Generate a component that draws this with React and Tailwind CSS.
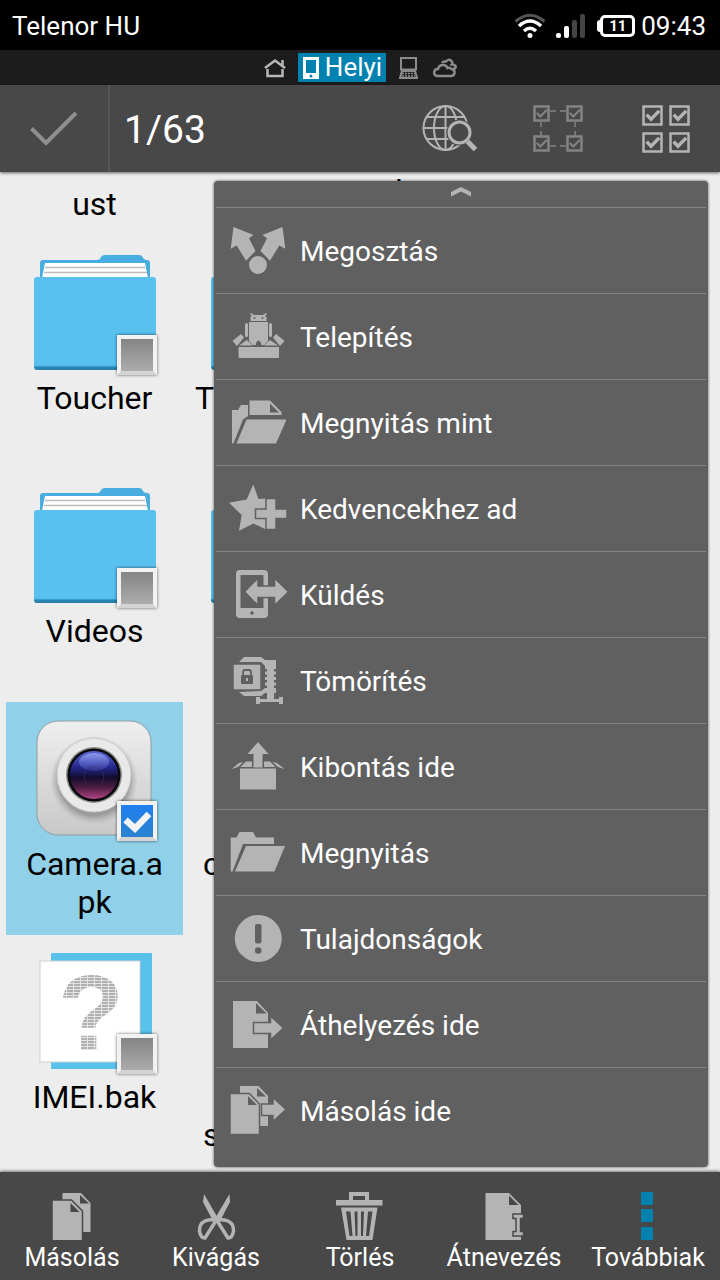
import React from "react";

const Share = () => (
  <>
    <path d="M3.5 4L23.5 12L19 15.3L25.5 28L16 37.7L6.7 22.5L.7 25.7Z" />
    <path d="M52.5 4L32.5 12L37 15.3L30.5 28L40 37.7L49.3 22.5L55.3 25.7Z" />
    <circle cx="28" cy="42" r="10" stroke="#606060" strokeWidth="2" />
  </>
);

const Install = () => (
  <>
    <path d="M20.5 12V8L22 7L20 5L21 4L24 6H33L36 4L37 5L35 7L36.5 8V12Z" />
    <circle cx="24.5" cy="9" r="1" fill="#606060" />
    <circle cx="32.5" cy="9" r="1" fill="#606060" />
    <path d="M19 13H38V32L34 36H31V34Q28.500 29 26 34V36H23L19 32Z" />
    <rect x="15" y="14" width="3" height="14" rx="1.500" />
    <rect x="39" y="14" width="3" height="14" rx="1.500" />
    <path d="M2.500 32L11 25L14 28.500L7 37Z" />
    <path d="M54.500 32L46 25L43 28.500L50 37Z" />
    <path d="M9 36.500L17 31L23 36.500Z" />
    <path d="M48 36.500L40 31L34 36.500Z" />
    <rect x="8.500" y="38" width="40.500" height="11" />
  </>
);

const OpenAs = () => (
  <>
    <path d="M2 48.500V15H8L11 10H18V21L13 24.500L3.500 48.500Z" />
    <path fillRule="evenodd" d="M19.500 5.500H40L51.500 17V20H19.500ZM40 8.500V17.500H49Z" />
    <path d="M16.500 24.500H56.500L46 48.500H6.500Z" />
  </>
);

const Favorite = () => (
  <>
    <path d="M23.300 3.500L28.500 18L36 17.500V48.500L23.500 42.500L9 49.700L11.700 34L-1 21.700L16.700 18.500Z" />
    <path
      d="M36 17.500H46V28H57V37.500H46V48.500H36V37.500H25.500V28H36Z"
      stroke="#606060"
      strokeWidth="1.500"
    />
  </>
);

const Send = () => (
  <>
    <path
      fillRule="evenodd"
      d="M9.500 3H34Q38 3 38 7V47Q38 51 34 51H9.500Q6 51 6 47V7Q6 3 9.500 3ZM10.500 8V41H33.500V8Z"
    />
    <circle cx="22" cy="46" r="1.800" fill="#606060" />
    <path
      d="M14.500 24.700L28 11V19H44.500V11L58.500 24.700L44.500 38.500V30.500H28V38.500Z"
      stroke="#606060"
      strokeWidth="1.500"
    />
  </>
);

const Compress = () => (
  <>
    <path d="M9 9L14 4H31L35 7H46V13H35L31 9Z" />
    <path d="M9 39L14 43H31L35 40H46V35H35L31 38Z" />
    <rect x="37" y="8" width="7" height="38" />
    <path d="M40.500 13V35" stroke="#b4b4b4" strokeWidth="11" strokeDasharray="3 2.500" />
    <path d="M26 44H30V46H49V44H53V51H49V49H30V51H26Z" />
    <rect x="3" y="11" width="28" height="26" stroke="#606060" strokeWidth="1.500" />
    <rect x="11" y="22" width="12" height="9" rx="1" fill="#606060" />
    <path d="M13 22V19Q13 17 15 17H19Q21 17 21 19V22" fill="none" stroke="#606060" strokeWidth="1.800" />
    <rect x="16" y="25" width="2" height="3" />
  </>
);

const Extract = () => (
  <>
    <path d="M28 3L38.500 15H32.500V28.500H23.500V15H17.500Z" />
    <path d="M10.500 28L16 22.500H22V28Z" />
    <path d="M45.500 28L40 22.500H34V28Z" />
    <path d="M1.500 30L9 24L13.500 23L8 28Z" />
    <path d="M54.500 30L47 24L42.500 23L48 28Z" />
    <rect x="10" y="29.500" width="36" height="21" />
  </>
);

const Open = () => (
  <>
    <path d="M.7 46.500V12.500H6.500L9.500 7H23L26 12.500H44V19H13L2.500 46.500Z" />
    <path d="M16 21H55L44.500 46.500H5Z" />
  </>
);

const Properties = () => (
  <>
    <circle cx="28.300" cy="27.500" r="23.500" />
    <rect x="25" y="13" width="6.500" height="19.500" rx="2" fill="#606060" />
    <circle cx="28.200" cy="39.500" r="3.300" fill="#606060" />
  </>
);

const MoveTo = () => (
  <>
    <path fillRule="evenodd" d="M3 4H27L38 16V51H3ZM26 6V16.500H36.500Z" />
    <path
      d="M23.500 25.500H40.500V19L53.500 31L40.500 43V36.500H23.500Z"
      stroke="#606060"
      strokeWidth="1.500"
    />
  </>
);

const CopyTo = () => (
  <>
    <path fillRule="evenodd" d="M10 3H28.500L38 13V43H10ZM27 5V13.500H36Z" />
    <path
      d="M31.500 21H43V14.500L56 26.500L43 38.500V32.500H31.500Z"
      stroke="#606060"
      strokeWidth="1.500"
    />
    <path d="M0 10.500H19.500L29.500 21V51.500H0Z" stroke="#606060" strokeWidth="1.500" />
    <path d="M18 13V22H27Z" fill="#606060" />
  </>
);

const menuItems = [
  { label: "Megosztás", Icon: Share },
  { label: "Telepítés", Icon: Install },
  { label: "Megnyitás mint", Icon: OpenAs },
  { label: "Kedvencekhez ad", Icon: Favorite },
  { label: "Küldés", Icon: Send },
  { label: "Tömörítés", Icon: Compress },
  { label: "Kibontás ide", Icon: Extract },
  { label: "Megnyitás", Icon: Open },
  { label: "Tulajdonságok", Icon: Properties },
  { label: "Áthelyezés ide", Icon: MoveTo },
  { label: "Másolás ide", Icon: CopyTo },
];

const Copy = () => (
  <>
    <path fillRule="evenodd" d="M14.500 1H33L42.500 11V40H14.500ZM32 3V11.500H41Z" />
    <path d="M4 8H23.500L34.500 19V49H4Z" stroke="#484848" strokeWidth="1.500" />
    <path d="M22.500 11V20H31.500Z" fill="#484848" />
  </>
);

const Cut = () => (
  <>
    <path d="M12 2L27 28L22 31L11 10Z" />
    <path d="M37.500 2L22 28L27 31L38 10Z" />
    <g fill="none" stroke="#b4b4b4" strokeWidth="3.500">
      <path d="M24 28Q18 27 13 29Q7 32 7.500 39Q8.500 46 13 46L25 27" />
      <path d="M25 28Q31 27 36 29Q42 32 41.500 39Q40.500 46 36 46L24 27" />
    </g>
  </>
);

const Trash = () => (
  <>
    <path fillRule="evenodd" d="M13 0H33V8H46.500V13.500H0V8H13ZM17 4V8H29V4Z" />
    <path
      fillRule="evenodd"
      d="M5 15.500H41.500L36.500 48H10.500ZM10 19.500L13.500 44H16.500L14.500 19.500ZM18.500 19.500L19.500 44H21.500V19.500ZM25 19.500V44H27L28 19.500ZM32 19.500L30 44H33L36.500 19.500Z"
    />
  </>
);

const Rename = () => (
  <>
    <path fillRule="evenodd" d="M5.500 1H29L41 13V48H5.500ZM29 3.500V13H38.500Z" />
    <path
      d="M33 22H43.500V26.500H40.500V39.500H43.500V44H33V39.500H36V26.500H33Z"
      stroke="#484848"
      strokeWidth="1.500"
    />
  </>
);

const More = () => (
  <g fill="#0081b0">
    <rect x="17" y="0" width="12" height="13" />
    <rect x="17" y="17" width="12" height="13" />
    <rect x="17" y="35" width="12" height="13" />
  </g>
);

const actions = [
  { label: "Másolás", Icon: Copy },
  { label: "Kivágás", Icon: Cut },
  { label: "Törlés", Icon: Trash },
  { label: "Átnevezés", Icon: Rename },
  { label: "Továbbiak", Icon: More },
];

const FolderArt = () => (
  <svg viewBox="0 0 125 125" className="size-[125px]" aria-hidden="true">
    <defs>
      <linearGradient id="folderFront" x1="0" y1="0" x2="0" y2="1">
        <stop offset="0.95" stopColor="#58c1f0" />
        <stop offset="0.97" stopColor="#2787b5" />
        <stop offset="1" stopColor="#2a7fa8" />
      </linearGradient>
    </defs>
    <path d="M8 30V11Q8 8 11 8H65Q68 8 69 5Q70 3 73 3H107Q110 3 111 6Q112 8 115 8Q118 8 118 11V30Z" fill="#48ade0" />
    <path d="M13 11H113L116 26H10Z" fill="#fff" />
    <path d="M13 15.500H113M12 20.500H115" stroke="#bdbdbd" strokeWidth="1.500" />
    <rect x="2" y="25" width="122" height="93" rx="3" fill="url(#folderFront)" />
  </svg>
);

const CameraArt = () => (
  <svg viewBox="0 0 125 125" className="size-[125px]" aria-hidden="true">
    <defs>
      <linearGradient id="camBody" x1="0" y1="0" x2="0" y2="1">
        <stop offset="0" stopColor="#efefef" />
        <stop offset="1" stopColor="#c8c8ca" />
      </linearGradient>
      <linearGradient id="camLens" x1="0" y1="0" x2="0" y2="1">
        <stop offset="0" stopColor="#5a68cf" />
        <stop offset="0.35" stopColor="#23258a" />
        <stop offset="0.55" stopColor="#120d2c" />
        <stop offset="0.75" stopColor="#4b1b42" />
        <stop offset="1" stopColor="#b04583" />
      </linearGradient>
      <radialGradient id="camShade">
        <stop offset="0.8" stopColor="#777" stopOpacity="0.6" />
        <stop offset="1" stopColor="#999" stopOpacity="0" />
      </radialGradient>
      <linearGradient id="camGloss" x1="0" y1="0" x2="0" y2="1">
        <stop offset="0" stopColor="#a5b4ff" stopOpacity="0.7" />
        <stop offset="1" stopColor="#6a7be0" stopOpacity="0.2" />
      </linearGradient>
    </defs>
    <rect x="5" y="3" width="114" height="114" rx="21" fill="url(#camBody)" stroke="#8f9da3" />
    <circle cx="62" cy="62" r="44" fill="url(#camShade)" />
    <circle cx="62" cy="57" r="37" fill="#e9e9e9" stroke="#c9c9c9" />
    <circle cx="62" cy="57" r="28" fill="#8b8b85" />
    <circle cx="62" cy="57" r="26.500" fill="#08080f" />
    <circle cx="62" cy="57" r="24" fill="url(#camLens)" />
    <ellipse cx="62" cy="44" rx="15" ry="9" fill="url(#camGloss)" />
    <circle cx="62" cy="59" r="10" fill="none" stroke="#443158" strokeOpacity="0.6" />
  </svg>
);

const UnknownArt = () => (
  <svg viewBox="0 0 125 125" className="size-[125px]" aria-hidden="true">
    <defs>
      <pattern id="scanlines" width="7" height="3" patternUnits="userSpaceOnUse">
        <rect width="7" height="3" fill="#e4e4e4" />
        <rect width="6" height="2" fill="#b0b0b0" />
      </pattern>
    </defs>
    <rect x="19" y="2" width="101" height="116" rx="1" fill="#58c1ec" />
    <rect x="8" y="10" width="100" height="101" fill="#fff" stroke="#cfcfcf" />
    <text
      x="59"
      y="99"
      textAnchor="middle"
      className="font-['Liberation_Sans'] text-[108px] leading-none font-bold"
      fill="url(#scanlines)"
    >
      ?
    </text>
  </svg>
);

// the second column is mostly under the menu
const rows = [
  [
    { name: "Toucher", Art: FolderArt },
    { name: "T", Art: FolderArt, cut: "pl-3" },
  ],
  [
    { name: "Videos", Art: FolderArt },
    { name: "", Art: FolderArt },
  ],
  [
    { name: "Camera.apk", Art: CameraArt, checked: true },
    { name: "c", cut: "pl-5" },
  ],
  [
    { name: "IMEI.bak", Art: UnknownArt },
    { name: "s", cut: "pl-5 pt-[38px]" },
  ],
];

const FileCell = ({ name, Art, checked, cut }) => (
  <label
    className={`flex h-[233px] flex-col items-center pt-4 ${checked ? "bg-[#90d1e9]" : ""}`}
  >
    <span className="relative block size-[125px]">
      {Art && <Art />}
      {Art && (
        <>
          <input
            type="checkbox"
            defaultChecked={checked}
            className="peer absolute right-0 bottom-0.5 size-10 appearance-none border-4 border-[#f2f2f2] border-b-[#d4d4d4] bg-linear-to-b from-[#858585] to-[#acacac] shadow-[0_0_3px_rgba(0,0,0,0.6)] checked:from-[#2080f0] checked:to-[#2b82cf]"
          />
          <svg
            viewBox="0 0 40 40"
            className="pointer-events-none absolute right-0 bottom-0.5 hidden size-10 peer-checked:block"
            aria-hidden="true"
          >
            <path d="M8.500 19L18 27.500L32 13" fill="none" stroke="#f4f4f4" strokeWidth="6.500" />
          </svg>
        </>
      )}
    </span>
    <span
      className={`mt-0.5 w-full px-4 text-[32px] leading-[38px] break-all ${cut ? `text-left ${cut}` : "text-center"}`}
    >
      {name}
    </span>
  </label>
);

const StatusBar = () => (
  <div className="flex h-[50px] items-center justify-between bg-black pt-0.5 pr-[14px] pl-3 text-[26px] text-white">
    <span>Telenor HU</span>
    <div className="flex items-center">
      <svg viewBox="0 0 32 26" className="mr-[10px] h-[26px] w-8" fill="none" aria-hidden="true">
        <path d="M1.500 8.500Q16 -4 30.500 8.500" stroke="#555" strokeWidth="3" />
        <path d="M5 13Q16 3 27 13" stroke="#fff" strokeWidth="3.500" />
        <path d="M10 18Q16 12.500 22 18" stroke="#fff" strokeWidth="3.500" />
        <circle cx="16" cy="22.500" r="2.500" fill="#fff" />
      </svg>
      <svg viewBox="0 0 30 24" className="mr-[11px] h-6 w-[30px]" aria-hidden="true">
        <rect x="0" y="19" width="5" height="5" rx="2" fill="#fff" />
        <rect x="8" y="12" width="5" height="12" rx="2" fill="#fff" />
        <rect x="16" y="6" width="5" height="18" rx="2" fill="#444" />
        <rect x="24" y="0" width="5" height="24" rx="2" fill="#444" />
      </svg>
      <div className="mr-[6px] flex items-center">
        <span className="h-3 w-[3px] rounded-l bg-white" />
        <span className="flex h-[22px] w-[35px] items-center justify-center rounded-[5px] border-3 border-white text-[15px] font-bold">
          11
        </span>
      </div>
      <span>09:43</span>
    </div>
  </div>
);

const LocationTabs = () => (
  <nav className="flex h-[35px] items-center justify-center bg-[#1c1c1c] pl-px text-white">
    <button aria-label="Kezdőlap" className="mr-3">
      <svg viewBox="0 0 22 20" className="h-5 w-[22px]" fill="none" stroke="#b8b8b8" strokeWidth="2.500" aria-hidden="true">
        <path d="M1 10L11 2.500L21 10M18.500 8V2M3.500 11V18H18.500V11" />
      </svg>
    </button>
    <button className="mr-[13px] flex h-[29px] items-center bg-[#0081b0] px-1 text-[26px]">
      <svg viewBox="0 0 18 22" className="mr-[5px] h-[22px] w-[18px]" aria-hidden="true">
        <path fillRule="evenodd" fill="#fff" d="M1 0H17V22H1ZM4 3V16H14V3Z" />
        <circle cx="9" cy="19" r="1.500" fill="#0081b0" />
      </svg>
      Helyi
    </button>
    <button aria-label="Hálózat" className="mr-[15px]">
      <svg viewBox="0 0 19 22" className="h-[22px] w-[19px]" fill="none" stroke="#8c8c8c" aria-hidden="true">
        <rect x="2" y="1" width="15" height="11.500" strokeWidth="2" />
        <path d="M3 14H16L18 21H1Z" strokeWidth="2" />
        <path d="M3 16.500H16M3 19H16" strokeWidth="1.500" strokeDasharray="2 1" />
      </svg>
    </button>
    <button aria-label="Felhő">
      <svg viewBox="0 0 24 20" className="h-5 w-6" fill="none" stroke="#8c8c8c" strokeWidth="2.500" aria-hidden="true">
        <path d="M4 18Q1 17.500 1 14.500Q1.500 11 5 11Q6 7 10 7Q13.500 7 14.500 10Q17 9 18.500 11Q22 12 21.500 15Q21 18 18 18Z" />
        <path d="M9 5Q10 3 13 3.500Q15 0.500 18.500 3Q20 5.500 19 6.500Q23.500 7 22.500 9.500Q22 11 20 10.500" />
      </svg>
    </button>
  </nav>
);

const TickBox = ({ x, y, size, w, tick }) => (
  <g transform={`translate(${x} ${y})`} strokeWidth={w}>
    <rect x="1.500" y="1.500" width={size - 3} height={size - 3} />
    <path
      d={`M${size * 0.22} ${size * 0.46}L${size * 0.43} ${size * 0.68}L${size * 0.82} ${size * 0.28}`}
      strokeWidth={tick}
    />
  </g>
);

const ActionBar = () => (
  <header className="relative z-10 flex h-[87px] items-center bg-[#484848] text-white shadow-[0_1px_3px_rgba(0,0,0,0.6)]">
    <button aria-label="Kész" className="flex h-full w-[110px] items-center justify-center border-r-2 border-[#565656]">
      <svg viewBox="0 0 48 36" className="h-9 w-12" fill="none" stroke="#8f8f8f" strokeWidth="4" aria-hidden="true">
        <path d="M1.500 17.500L16 32L46 2" />
      </svg>
    </button>
    <h1 className="flex-1 pt-[3px] pl-[14px] text-[39px]">1/63</h1>
    <button aria-label="Keresés" className="flex w-[108px] justify-center">
      <svg viewBox="0 0 56 48" className="h-12 w-14" fill="none" stroke="#b4b4b4" strokeWidth="2" aria-hidden="true">
        <circle cx="23.500" cy="23" r="22" />
        <ellipse cx="23.500" cy="23" rx="11.500" ry="22" />
        <path d="M23.500 1V45M1.500 23H45M4.500 12H42.500M4.500 34H42.500" />
        <circle cx="37.500" cy="27.500" r="13" fill="#484848" stroke="none" />
        <circle cx="37.500" cy="27.500" r="10.500" fill="#484848" strokeWidth="3" />
        <path d="M45.500 36.500L53.500 44.500" strokeWidth="5" />
      </svg>
    </button>
    <button aria-label="Tartomány kijelölése" className="flex w-[108px] justify-center">
      <svg viewBox="0 0 50 48" className="h-12 w-[50px]" fill="none" stroke="#848484" aria-hidden="true">
        <TickBox x={0} y={0} size={17} w={2.5} tick={2} />
        <TickBox x={33} y={0} size={17} w={2.5} tick={2} />
        <TickBox x={0} y={30} size={17} w={2.5} tick={2} />
        <TickBox x={33} y={30} size={17} w={2.5} tick={2} />
        <path
          d="M17 6H23M27 6H33M17 41H23M27 41H33M8 17V22M8 26V31M42 17V22M42 26V31"
          strokeWidth="1.500"
        />
      </svg>
    </button>
    <button aria-label="Összes kijelölése" className="flex w-[108px] justify-center">
      <svg viewBox="0 0 48 48" className="size-12" fill="none" stroke="#b4b4b4" aria-hidden="true">
        <TickBox x={0} y={0} size={21} w={2.5} tick={3.5} />
        <TickBox x={27} y={0} size={21} w={2.5} tick={3.5} />
        <TickBox x={0} y={27} size={21} w={2.5} tick={3.5} />
        <TickBox x={27} y={27} size={21} w={2.5} tick={3.5} />
      </svg>
    </button>
  </header>
);

const ContextMenu = () => (
  <div className="absolute top-[9px] right-3 left-[214px] rounded-sm bg-[#606060] px-[2px] pb-[14px] text-white shadow-[0_0_3px_rgba(0,0,0,0.7)]">
    <div className="flex h-[27px] justify-center border-b border-[#858585] pt-1">
      <svg viewBox="0 0 20 12" className="h-3 w-5" fill="#b4b4b4" aria-hidden="true">
        <path d="M0 7L10 2L20 7V11.500L10 6.500L0 11.500Z" />
      </svg>
    </div>
    <ul className="divide-y divide-[#858585]">
      {menuItems.map(({ label, Icon }) => (
        <li key={label}>
          <button className="flex h-[85px] w-full items-center gap-[14px] pt-px pl-[14px] text-left text-[28px]">
            <svg viewBox="0 0 56 56" className="size-14 overflow-visible" fill="#b4b4b4" aria-hidden="true">
              <Icon />
            </svg>
            <span className="pt-0.5">{label}</span>
          </button>
        </li>
      ))}
    </ul>
  </div>
);

const App = () => {
  return (
    <div className="flex h-screen flex-col overflow-hidden bg-[#ededed] font-[Roboto,sans-serif] text-black">
      <StatusBar />
      <LocationTabs />
      <ActionBar />

      {/* File grid, scrolled so that only the end of the first row is seen */}
      <main className="relative min-h-0 flex-1 overflow-hidden px-[6px]">
        <div className="grid h-16 grid-cols-4 text-center text-[32px] leading-[38px]">
          <span className="pt-[13px]">ust</span>
          <span className="col-start-3 pl-[35px] text-left">l</span>
        </div>
        {rows.map((row) => (
          <div key={row[0].name} className="grid grid-cols-4">
            {row.map((file) => (
              <FileCell key={file.name} {...file} />
            ))}
          </div>
        ))}
        <ContextMenu />
      </main>

      <footer className="relative grid h-[108px] grid-cols-5 bg-[#484848] text-white shadow-[0_-1px_3px_rgba(0,0,0,0.5)]">
        {actions.map(({ label, Icon }) => (
          <button key={label} className="flex flex-col items-center pt-5 text-[25px] leading-9">
            <svg viewBox="0 0 48 48" className="size-12" fill="#b4b4b4" aria-hidden="true">
              <Icon />
            </svg>
            {label}
          </button>
        ))}
      </footer>
    </div>
  );
};

export default App;
